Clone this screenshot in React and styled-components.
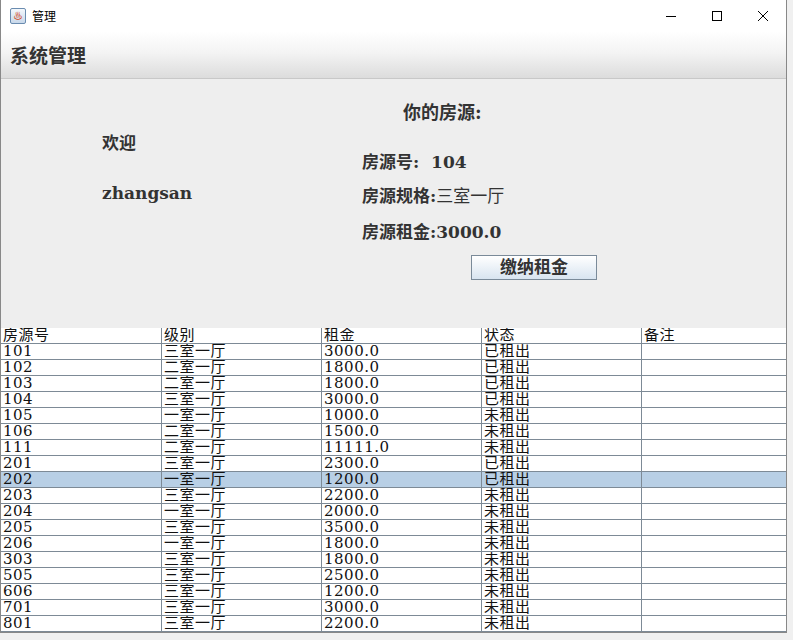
import React from 'react';
import styled, { createGlobalStyle } from 'styled-components';

const GlobalStyle = createGlobalStyle`
  html, body { margin: 0; padding: 0; background: #f0f0f0; }
  body { font-family: "DejaVu Serif", "Noto Sans CJK SC", serif; }
`;

const rows = [
  ['101', '三室一厅', '3000.0', '已租出'],
  ['102', '二室一厅', '1800.0', '已租出'],
  ['103', '二室一厅', '1800.0', '已租出'],
  ['104', '三室一厅', '3000.0', '已租出'],
  ['105', '一室一厅', '1000.0', '未租出'],
  ['106', '二室一厅', '1500.0', '未租出'],
  ['111', '二室一厅', '11111.0', '未租出'],
  ['201', '三室一厅', '2300.0', '已租出'],
  ['202', '一室一厅', '1200.0', '已租出'],
  ['203', '三室一厅', '2200.0', '未租出'],
  ['204', '一室一厅', '2000.0', '未租出'],
  ['205', '三室一厅', '3500.0', '未租出'],
  ['206', '一室一厅', '1800.0', '未租出'],
  ['303', '三室一厅', '1800.0', '未租出'],
  ['505', '三室一厅', '2500.0', '未租出'],
  ['606', '三室一厅', '1200.0', '未租出'],
  ['701', '三室一厅', '3000.0', '未租出'],
  ['801', '三室一厅', '2200.0', '未租出'],
];

const Window = styled.div`
  width: 785px;
  height: 632px;
  background: #fff;
  border-left: 1px solid #888;
  border-right: 1px solid #888;
  border-bottom: 1px solid #888;
  display: flex;
  flex-direction: column;
  overflow: hidden;
`;

const TitleBar = styled.div`
  height: 31px;
  display: flex;
  align-items: center;
  background: #fff;
  font-family: "Noto Sans CJK SC", sans-serif;
  font-size: 12px;
  color: #000;
`;

const AppIcon = styled.div`
  width: 14px;
  height: 14px;
  margin: 0 6px 0 9px;
  border: 1px solid #6a8cb0;
  border-radius: 2px;
  background: linear-gradient(#f4f8fc, #c8d8ea);
  display: flex;
  align-items: center;
  justify-content: center;
  font-size: 9px;
  color: #d2491c;
  line-height: 1;
`;

const Controls = styled.div`
  margin-left: auto;
  display: flex;
`;

const Ctrl = styled.div`
  width: 46px;
  height: 31px;
  display: flex;
  align-items: center;
  justify-content: center;
`;

const MenuBar = styled.div`
  height: 48px;
  background: linear-gradient(#ffffff 0%, #f4f4f4 45%, #dcdcdc 100%);
  border-bottom: 1px solid #c8c8c8;
  display: flex;
  align-items: center;
  padding-left: 9px;
  font-size: 19px;
  color: #333;
  font-weight: bold;
`;

const Panel = styled.div`
  height: 254px;
  background: #eeeeee;
  display: grid;
  grid-template-columns: 361px 1fr;
  color: #333;
  font-weight: bold;
`;

const Welcome = styled.div`
  padding: 53px 0 0 101px;
  font-size: 17px;
  display: flex;
  flex-direction: column;
  gap: 28px;
  line-height: 22px;
`;

const Info = styled.div`
  display: flex;
  flex-direction: column;
  font-size: 17px;
  line-height: 22px;
`;

const InfoTitle = styled.div`
  margin: 23px 0 0 41px;
  font-size: 18px;
`;

const InfoLine = styled.div`
  margin-top: ${p => p.$mt}px;
  white-space: pre;
`;

const Light = styled.span`
  font-weight: normal;
`;

const PayButton = styled.button`
  margin: 12px 0 0 109px;
  width: 126px;
  height: 25px;
  border: 1px solid #7a8a99;
  background: linear-gradient(#ffffff, #d8e4f0);
  font-family: inherit;
  font-size: 17px;
  font-weight: bold;
  color: #333;
  padding: 0;
  line-height: 1;
`;

const Table = styled.div`
  flex: 1;
  background: #fff;
  font-size: 15px;
  color: #111;
`;

const Row = styled.div`
  display: grid;
  grid-template-columns: 160px 160px 160px 160px 1fr;
  height: 15px;
  border-bottom: 1px solid #7d8a96;
  background: ${p => (p.$selected ? '#b8cfe5' : '#fff')};
  border-top: ${p => (p.$selected ? '1px solid #7d8a96' : 'none')};
  margin-top: ${p => (p.$selected ? '-1px' : '0')};
`;

const Cell = styled.div`
  border-left: ${p => (p.$first ? 'none' : '1px solid #7d8a96')};
  padding-left: 2px;
  line-height: 15px;
  overflow: hidden;
  white-space: nowrap;
  letter-spacing: 0.5px;
`;

export default function App() {
  return (
    <>
      <GlobalStyle />
      <Window>
        <TitleBar>
          <AppIcon>♨</AppIcon>
          管理
          <Controls>
            <Ctrl>
              <svg width="10" height="10"><path d="M0 5.5H10" stroke="#000" /></svg>
            </Ctrl>
            <Ctrl>
              <svg width="10" height="10"><rect x="0.5" y="0.5" width="9" height="9" fill="none" stroke="#000" /></svg>
            </Ctrl>
            <Ctrl>
              <svg width="10" height="10"><path d="M0 0L10 10M10 0L0 10" stroke="#000" /></svg>
            </Ctrl>
          </Controls>
        </TitleBar>
        <MenuBar>系统管理</MenuBar>
        <Panel>
          <Welcome>
            <div>欢迎</div>
            <div>zhangsan</div>
          </Welcome>
          <Info>
            <InfoTitle>你的房源:</InfoTitle>
            <InfoLine $mt={27}>房源号:  104</InfoLine>
            <InfoLine $mt={12}>房源规格:<Light>三室一厅</Light></InfoLine>
            <InfoLine $mt={14}>房源租金:3000.0</InfoLine>
            <div><PayButton>缴纳租金</PayButton></div>
          </Info>
        </Panel>
        <Table>
          <Row>
            {['房源号', '级别', '租金', '状态', '备注'].map((h, i) => (
              <Cell key={h} $first={i === 0}>{h}</Cell>
            ))}
          </Row>
          {rows.map(r => (
            <Row key={r[0]} $selected={r[0] === '202'}>
              {[...r, ''].map((c, i) => (
                <Cell key={i} $first={i === 0}>{c}</Cell>
              ))}
            </Row>
          ))}
        </Table>
      </Window>
    </>
  );
}
